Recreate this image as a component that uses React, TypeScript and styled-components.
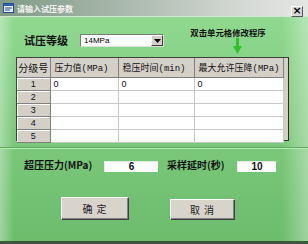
import styled, { createGlobalStyle } from 'styled-components';

const GlobalStyle = createGlobalStyle`
  html, body { margin: 0; padding: 0; }
  body {
    font-family: "Noto Sans CJK SC", "Liberation Sans", sans-serif;
    background: #6cbc6c;
  }
`;

const rows = [
  { no: 1, pressure: '0', time: '0', drop: '0' },
  { no: 2, pressure: '', time: '', drop: '' },
  { no: 3, pressure: '', time: '', drop: '' },
  { no: 4, pressure: '', time: '', drop: '' },
  { no: 5, pressure: '', time: '', drop: '' },
];

const App = () => {
  return (
    <>
      <GlobalStyle />
      <WindowS>
        <TitleBarS>
          <TitleIcon />
          <TitleTextS>请输入试压参数</TitleTextS>
          <CloseBtnS>×</CloseBtnS>
        </TitleBarS>
        <BodyS>
          <GradeRowS>
            <GradeLabelS>试压等级</GradeLabelS>
            <SelectS>
              <span>14MPa</span>
              <DropBtnS>
                <svg width="7" height="4" viewBox="0 0 7 4">
                  <path d="M0 0h7L3.5 4z" fill="#000" />
                </svg>
              </DropBtnS>
            </SelectS>
            <HintS>
              <HintTextS>双击单元格修改程序</HintTextS>
              <DownArrow />
            </HintS>
          </GradeRowS>

          <GridWrapS>
            <TableS>
              <colgroup>
                <col style={{ width: 33 }} />
                <col style={{ width: 68 }} />
                <col style={{ width: 76 }} />
                <col style={{ width: 89 }} />
              </colgroup>
              <thead>
                <tr>
                  <HeadCellS>分级号</HeadCellS>
                  <HeadCellS>压力值(MPa)</HeadCellS>
                  <HeadCellS>稳压时间(min)</HeadCellS>
                  <HeadCellS>最大允许压降(MPa)</HeadCellS>
                </tr>
              </thead>
              <tbody>
                {rows.map((r) => (
                  <tr key={r.no}>
                    <RowHeadS>{r.no}</RowHeadS>
                    <CellS>{r.pressure}</CellS>
                    <CellS>{r.time}</CellS>
                    <CellS>{r.drop}</CellS>
                  </tr>
                ))}
              </tbody>
            </TableS>
            <GutterS />
          </GridWrapS>

          <SeparatorS />

          <ParamRowS>
            <ParamLabelS $width={80}>超压压力(MPa)</ParamLabelS>
            <ValueBoxS $width={54}>6</ValueBoxS>
            <ParamLabelS $width={70} $ml={9}>采样延时(秒)</ParamLabelS>
            <ValueBoxS $width={39}>10</ValueBoxS>
          </ParamRowS>

          <ButtonRowS>
            <ButtonS $width={68}>确 定</ButtonS>
            <ButtonS $width={65} $mt={2}>取 消</ButtonS>
          </ButtonRowS>
        </BodyS>
      </WindowS>
    </>
  );
};

export default App;

const TitleIcon = () => (
  <svg width="11" height="10" viewBox="0 0 11 10">
    <rect x="0.5" y="0.5" width="10" height="9" fill="#e8eef8" stroke="#2a4a8a" />
    <rect x="1" y="1" width="9" height="2" fill="#3060b0" />
    <path d="M2 5h7M2 7h5" stroke="#2a4a8a" strokeWidth="1" />
  </svg>
);

const DownArrow = () => (
  <svg width="9" height="16" viewBox="0 0 9 16">
    <rect x="3" y="0" width="3" height="9" fill="#2ec02e" />
    <path d="M0 8h9L4.5 16z" fill="#2ec02e" />
  </svg>
);

const WindowS = styled.div`
  width: 308px;
  height: 244px;
  box-sizing: border-box;
  display: flex;
  flex-direction: column;
  border-bottom: 3px solid #3a5a3a;
  overflow: hidden;
`;

const TitleBarS = styled.div`
  height: 16px;
  flex: none;
  display: flex;
  align-items: center;
  padding: 0 5px 0 3px;
  gap: 3px;
  background: linear-gradient(to right, #7f9a86 0%, #a9b8ac 40%, #d6dad6 80%, #e4e6e4 100%);
  border-bottom: 1px solid #cfe8cf;
`;

const TitleTextS = styled.span`
  color: #f4f4f4;
  font-size: 8px;
  font-weight: bold;
  flex: 1;
`;

const CloseBtnS = styled.div`
  width: 12px;
  height: 11px;
  margin-top: 6px;
  box-sizing: border-box;
  border: 1px solid #fff;
  border-right-color: #555;
  border-bottom-color: #555;
  background: #d8d8d8;
  color: #000;
  font-family: "DejaVu Sans", sans-serif;
  font-size: 11px;
  font-weight: bold;
  line-height: 8px;
  text-align: center;
`;

const BodyS = styled.div`
  flex: 1;
  display: flex;
  flex-direction: column;
  background:
    linear-gradient(to right, rgba(255, 255, 255, 0.35) 0px, rgba(255, 255, 255, 0) 14px,
      rgba(255, 255, 255, 0) 282px, rgba(255, 255, 255, 0.35) 308px),
    linear-gradient(to bottom, #90d890 0%, #80cc80 40%, #6cbc6c 100%);
`;

const GradeRowS = styled.div`
  height: 40px;
  display: flex;
  align-items: flex-start;
  padding-left: 24px;
`;

const GradeLabelS = styled.span`
  width: 56px;
  margin-top: 16px;
  font-size: 11px;
  font-weight: bold;
  line-height: 14px;
  color: #111;
  white-space: nowrap;
`;

const SelectS = styled.div`
  margin-top: 17px;
  width: 84px;
  height: 13px;
  box-sizing: border-box;
  background: #fff;
  border: 1px solid #7a7a7a;
  border-right-color: #e0e0e0;
  border-bottom-color: #e0e0e0;
  display: flex;
  align-items: center;
  justify-content: space-between;
  font-family: "Liberation Sans", sans-serif;
  font-size: 8px;
  padding-left: 3px;
  span {
    line-height: 11px;
  }
`;

const DropBtnS = styled.div`
  width: 12px;
  height: 11px;
  box-sizing: border-box;
  background: #d4d0c8;
  border: 1px solid #fff;
  border-right-color: #404040;
  border-bottom-color: #404040;
  display: flex;
  align-items: center;
  justify-content: center;
`;

const HintS = styled.div`
  margin-left: 26px;
  margin-top: 10px;
  display: flex;
  flex-direction: column;
  align-items: center;
  width: 76px;
  svg {
    margin-left: 18px;
  }
`;

const HintTextS = styled.span`
  font-size: 8.4px;
  font-weight: bold;
  color: #111;
  line-height: 11px;
  white-space: nowrap;
`;

const GridWrapS = styled.div`
  margin: 0 0 0 16px;
  width: 273px;
  height: 84px;
  box-sizing: border-box;
  border: 1px solid #404040;
  border-right-color: #2a2a2a;
  display: flex;
  background: #d4d0c8;
`;

const GutterS = styled.div`
  flex: 1;
  background: #d4d0c8;
`;

const TableS = styled.table`
  border-collapse: collapse;
  table-layout: fixed;
  width: 266px;
  font-family: "Liberation Mono", "Noto Sans CJK SC", monospace;
  font-size: 9px;
`;

const HeadCellS = styled.th`
  height: 19px;
  padding: 0 0 0 4px;
  background: #d4d0c8;
  border: 1px solid #808080;
  border-top: none;
  font-weight: normal;
  text-align: left;
  white-space: nowrap;
  overflow: hidden;
  color: #111;
  &:first-child {
    border-left: none;
    text-align: center;
    padding: 0;
    font-size: 10px;
  }
`;

const RowHeadS = styled.td`
  height: 12px;
  padding: 0;
  background: #d4d0c8;
  border: 1px solid #808080;
  border-left: none;
  box-shadow: inset 1px 1px 0 #fff;
  text-align: center;
  font-family: "Liberation Sans", sans-serif;
  font-size: 9px;
  line-height: 11px;
  color: #111;
`;

const CellS = styled.td`
  height: 12px;
  padding: 0 0 0 3px;
  background: #fff;
  border: 1px solid #c8c8c8;
  border-left-color: #a0a0a0;
  font-family: "Liberation Sans", sans-serif;
  font-size: 9px;
  line-height: 11px;
  color: #111;
`;

const SeparatorS = styled.div`
  margin-top: 6px;
  height: 1px;
  background: #5ea85e;
  border-bottom: 1px solid #b8ecb8;
`;

const ParamRowS = styled.div`
  margin-top: 8px;
  display: flex;
  align-items: center;
  padding-left: 24px;
  height: 16px;
`;

const ParamLabelS = styled.span<{ $width: number; $ml?: number }>`
  width: ${(p) => p.$width}px;
  margin-left: ${(p) => p.$ml ?? 0}px;
  font-size: 10px;
  font-weight: bold;
  line-height: 14px;
  color: #111;
  white-space: nowrap;
`;

const ValueBoxS = styled.div<{ $width: number }>`
  width: ${(p) => p.$width}px;
  height: 11px;
  margin-top: 3px;
  box-sizing: border-box;
  background: #fff;
  border-top: 1px solid #e8e8e8;
  border-left: 1px solid #e8e8e8;
  text-align: center;
  font-family: "Liberation Sans", sans-serif;
  font-size: 10px;
  font-weight: bold;
  line-height: 10px;
  color: #111;
`;

const ButtonRowS = styled.div`
  margin-top: 24px;
  display: flex;
  align-items: flex-start;
  padding-left: 61px;
  gap: 41px;
`;

const ButtonS = styled.button<{ $width: number; $mt?: number }>`
  width: ${(p) => p.$width}px;
  height: ${(p) => 23 - (p.$mt ?? 0)}px;
  margin-top: ${(p) => p.$mt ?? 0}px;
  padding: 0;
  box-sizing: border-box;
  background: #d8d4cc;
  border: 1px solid #fff;
  border-right-color: #404040;
  border-bottom-color: #404040;
  box-shadow: inset -1px -1px 0 #808080;
  font-family: "Noto Sans CJK SC", sans-serif;
  font-size: 10px;
  color: #222;
  letter-spacing: 1px;
`;
